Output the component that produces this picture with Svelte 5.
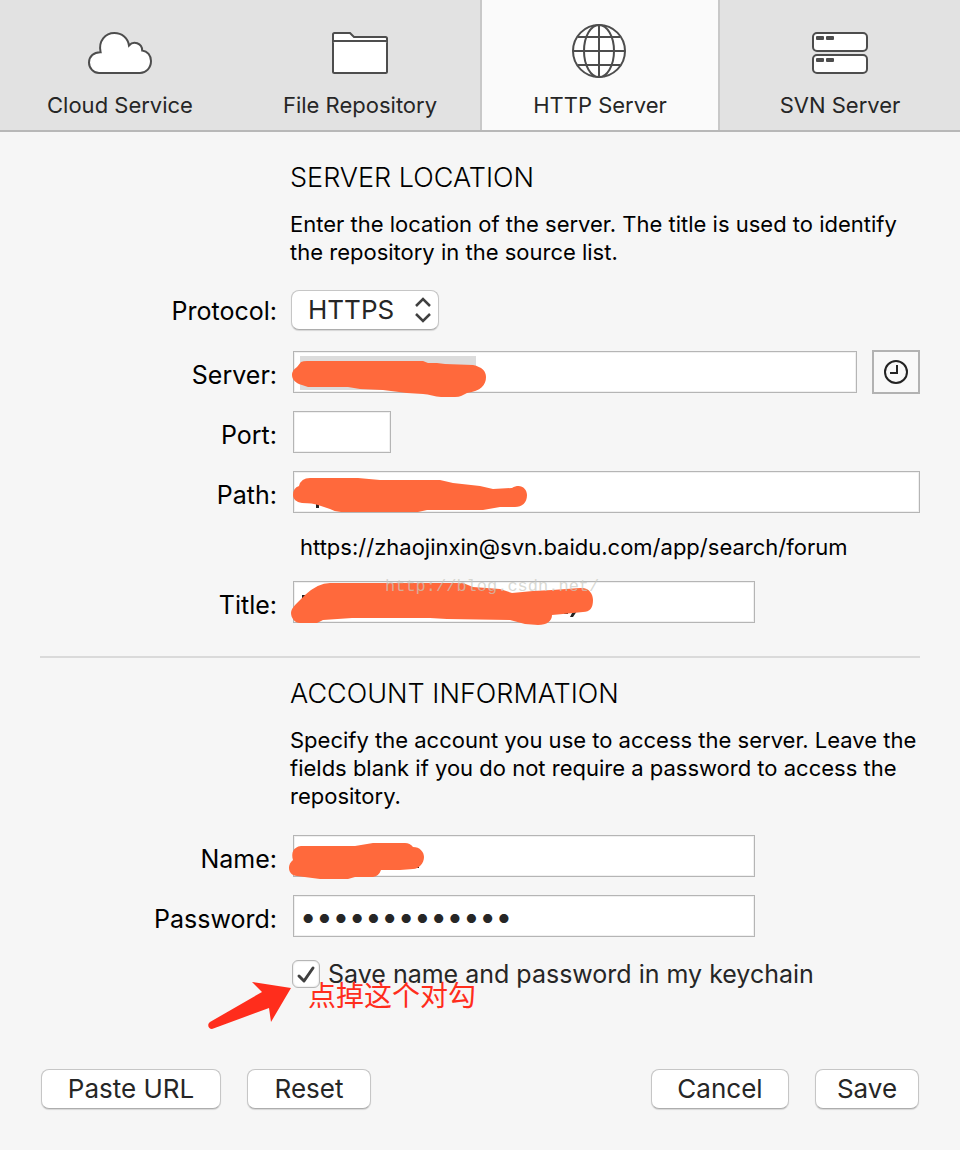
<script>
    let activeTab = "http";
    let protocol = "HTTPS";
    let server = "";
    let port = "";
    let path = "";
    let title = "";
    let name = "";
    let password = "thirteenchars";
    let keychain = true;

    const tabs = [
        { id: "cloud", label: "Cloud Service" },
        { id: "file", label: "File Repository" },
        { id: "http", label: "HTTP Server" },
        { id: "svn", label: "SVN Server" },
    ];

    function reset() {
        protocol = "HTTPS";
        server = port = path = title = name = password = "";
    }
</script>

<div class="window">
    <nav class="tabs">
        {#each tabs as tab}
            <button
                type="button"
                class="tab"
                class:active={activeTab === tab.id}
                on:click={() => (activeTab = tab.id)}
            >
                <svg class="tab-icon" viewBox="0 0 64 56" aria-hidden="true">
                    {#if tab.id === "cloud"}
                        <path
                            d="M11 51C5.500 51 1 46 1 40.500C1 34.500 5.800 30 12.600 30.200C10 19 17.500 11 26.300 11C34 11 40 16 41 23.500C45.500 18.500 54 21 54.200 28.500C59.500 29 63 33.500 63 39C63 46 58 51 52 51Z"
                        />
                    {:else if tab.id === "file"}
                        <path
                            d="M5 49.500V12.500Q5 11 6.500 11H22L26 15H57.500Q59 15 59 16.500V49.500Q59 51 57.500 51H6.500Q5 51 5 49.500Z"
                        />
                        <path d="M5 20.500Q5 19 6.500 19H57.500Q59 19 59 20.500" />
                    {:else if tab.id === "http"}
                        <circle cx="31" cy="29" r="26" />
                        <ellipse cx="31" cy="29" rx="15" ry="26" />
                        <path d="M31 3V55M5 29H57M10 15H52M10 43H52" />
                    {:else}
                        <rect x="5" y="11" width="54" height="18" rx="4" />
                        <rect x="5" y="33" width="54" height="18" rx="4" />
                        <g class="slots">
                            <rect x="8" y="14" width="8" height="4" rx="1" />
                            <rect x="18" y="14" width="8" height="4" rx="1" />
                            <rect x="8" y="36" width="8" height="4" rx="1" />
                            <rect x="18" y="36" width="8" height="4" rx="1" />
                        </g>
                    {/if}
                </svg>
                <span>{tab.label}</span>
            </button>
        {/each}
    </nav>

    <form on:submit|preventDefault>
        <section>
            <div class="intro">
                <h2>SERVER LOCATION</h2>
                <p>
                    Enter the location of the server. The title is used to
                    identify the repository in the source list.
                </p>
            </div>

            <div class="row protocol">
                <label for="protocol">Protocol:</label>
                <div class="select">
                    <select id="protocol" bind:value={protocol}>
                        <option>HTTP</option>
                        <option>HTTPS</option>
                    </select>
                    <svg viewBox="0 0 16 24" aria-hidden="true">
                        <path d="M1 8L8 1L15 8M1 16L8 23L15 16" />
                    </svg>
                </div>
            </div>

            <div class="row">
                <label for="server">Server:</label>
                <div class="line">
                    <div class="field">
                        <input id="server" type="text" bind:value={server} />
                        <svg class="scribble" aria-hidden="true">
                            <rect
                                class="selection"
                                x="7"
                                y="5"
                                width="176"
                                height="34"
                            />
                            <path
                                d="M8 11Q10 10 14 10H130L135 12H144L152 13L180 14C189 16 193 20 193 26C193 34 188 40 174 42L168 45Q166 46 162 46H148C142 46 136 43 130 43L114 42L90 39L67 38L55 36H15L9 34C2 32 -1 28 -1 24Q-1 19 4 16Z"
                            />
                        </svg>
                    </div>
                    <button type="button" class="history" aria-label="Recent servers">
                        <svg viewBox="0 0 24 24" aria-hidden="true">
                            <circle cx="12" cy="12" r="11" />
                            <path d="M13 5V13H6" />
                        </svg>
                    </button>
                </div>
            </div>

            <div class="row">
                <label for="port">Port:</label>
                <div class="field port">
                    <input id="port" type="text" bind:value={port} />
                </div>
            </div>

            <div class="row">
                <label for="path">Path:</label>
                <div class="field">
                    <input id="path" type="text" bind:value={path} />
                    <svg class="scribble" aria-hidden="true">
                        <rect class="ink" x="23" y="31" width="3" height="6" />
                        <path
                            d="M6 15Q8 7 17 7H65L87 9H147L160 12L187 15L200 18L219 17C227 12 234 17 234 24C234 32 229 36 222 36H207L190 39H134L125 41H48Q42 41 37 38L25 34Q20 32 9 32C3 31 0 28 0 24Q0 17 6 15Z"
                        />
                    </svg>
                </div>
            </div>

            <output class="url" for="server path">
                https://zhaojinxin@svn.baidu.com/app/search/forum
            </output>

            <div class="row">
                <label for="title">Title:</label>
                <div class="field medium">
                    <input id="title" type="text" bind:value={title} />
                    <svg class="scribble" aria-hidden="true">
                        <path class="ink" d="M9 14H12V18H9ZM271 31H275V33H271ZM280 30H284L280 36H277Z" />
                        <path
                            d="M12 14Q25 2 37 2H170L180 6L207 8L219 12L240 10L259 9L287 7C296 6 300 13 300 19C300 27 297 31 290 31L270 33L259 34C259 40 254 44 245 44L232 43L217 39L154 38L137 37H59L30 39L24 42H7C2 42 -2 37 -2 32Q-2 28 3 23Z"
                        />
                    </svg>
                    <span class="watermark">http://blog.csdn.net/</span>
                </div>
            </div>
        </section>

        <hr />

        <section>
            <div class="intro">
                <h2>ACCOUNT INFORMATION</h2>
                <p>
                    Specify the account you use to access the server. Leave the
                    fields blank if you do not require a password to access the
                    repository.
                </p>
            </div>

            <div class="row">
                <label for="name">Name:</label>
                <div class="field medium">
                    <input id="name" type="text" bind:value={name} />
                    <svg class="scribble" aria-hidden="true">
                        <rect class="ink" x="124" y="31" width="2" height="2" />
                        <path
                            d="M8 11H62L80 8H112Q117 8 120 12C127 12 131 17 131 22C131 28 126 34 120 34L107 35H88Q86 41 80 42H62L55 44H27L4 41C-1 41 -4 37 -4 33Q-4 28 0 25C-2 18 0 12 8 11Z"
                        />
                    </svg>
                </div>
            </div>

            <div class="row">
                <label for="password">Password:</label>
                <div class="field medium">
                    <input
                        id="password"
                        type="password"
                        autocomplete="off"
                        bind:value={password}
                    />
                </div>
            </div>

            <div class="keychain">
                <label>
                    <input type="checkbox" bind:checked={keychain} />
                    Save name and password in my keychain
                </label>
                <div class="note">
                    <svg viewBox="0 0 84 48" aria-hidden="true">
                        <path
                            d="M83 6L44 0L54 10L2 40C-1 42 0 47 4 47L61 26L63 40Z"
                        />
                    </svg>
                    <span lang="zh">点掉这个对勾</span>
                </div>
            </div>
        </section>

        <footer>
            <button type="button" class="push paste">Paste URL</button>
            <button type="button" class="push reset" on:click={reset}>Reset</button>
            <button type="button" class="push cancel">Cancel</button>
            <button type="submit" class="push save">Save</button>
        </footer>
    </form>
</div>

<style>
    :global(body) {
        margin: 0;
        background: #f6f6f6;
    }

    .window {
        font-family: Inter, "Noto Sans CJK SC", sans-serif;
        font-size: 26px;
        line-height: 32px;
        color: #000;
    }

    button,
    input,
    select {
        box-sizing: border-box;
        margin: 0;
        font: inherit;
        color: #262626;
    }

    .tabs {
        display: grid;
        grid-template-columns: repeat(4, 1fr);
        background: #e2e2e2;
        border-bottom: 2px solid #b8b8b8;
    }
    .tab {
        display: flex;
        flex-direction: column;
        align-items: center;
        gap: 12px;
        padding: 22px 0 10px;
        font-size: 22px;
        line-height: 30px;
        background: none;
        border: 0 solid #c8c8c8;
    }
    .tab.active {
        background: #fafafa;
        border-width: 0 2px;
    }
    .tab-icon {
        width: 64px;
        height: 56px;
        fill: #fff;
        stroke: #4d4d4d;
        stroke-width: 2;
    }
    .slots {
        fill: #4d4d4d;
        stroke: none;
    }

    form {
        padding: 30px 40px 40px;
    }

    section {
        display: flex;
        flex-direction: column;
        gap: 16px;
    }

    .intro {
        padding: 0 0 8px 250px;
    }
    h2 {
        margin: 0 0 16px;
        font-size: 27px;
        font-weight: 300;
    }
    p {
        margin: 0;
        font-size: 22px;
        line-height: 28px;
    }

    .row {
        display: grid;
        grid-template-columns: 237px 1fr;
        column-gap: 16px;
        align-items: center;
        min-height: 44px;
    }
    .row label {
        padding-top: 6px;
        font-size: 25px;
        text-align: right;
    }

    .row.protocol {
        column-gap: 14px;
        min-height: 40px;
        padding-bottom: 4px;
    }
    .row.protocol label {
        padding-top: 2px;
    }

    .select {
        position: relative;
        width: 148px;
    }
    .select select {
        display: block;
        appearance: none;
        width: 100%;
        height: 40px;
        padding: 0 16px;
        background: #fff;
        border: 1px solid #c6c6c6;
        border-bottom-color: #adadad;
        border-radius: 8px;
        box-shadow: 0 1px 1px #0002;
    }
    .select svg {
        position: absolute;
        top: 8px;
        right: 8px;
        width: 16px;
        height: 24px;
        overflow: visible;
        fill: none;
        stroke: #404040;
        stroke-width: 2.5;
        pointer-events: none;
    }

    .line {
        display: flex;
        align-items: center;
        gap: 15px;
    }
    .field {
        position: relative;
        flex: 1;
    }
    .medium {
        max-width: 462px;
    }
    .port {
        max-width: 98px;
    }
    .field input {
        display: block;
        width: 100%;
        height: 42px;
        padding: 0 8px;
        background: #fff;
        border: 1px solid #b5b5b5;
        border-radius: 0;
        box-shadow: inset 0 0 0 1px #f0f0f0;
    }
    .field input[type="password"] {
        padding: 0 6px;
        font-size: 29px;
    }

    .history {
        display: grid;
        place-items: center;
        width: 48px;
        height: 44px;
        padding: 0;
        background: #f8f8f8;
        border: 2px solid #b2b2b2;
    }
    .history svg {
        width: 24px;
        height: 24px;
        fill: none;
        stroke: #222;
        stroke-width: 2;
    }

    .scribble {
        position: absolute;
        top: 0;
        left: 0;
        width: 100%;
        height: 100%;
        overflow: visible;
        fill: #ff693c;
        pointer-events: none;
    }
    .selection {
        fill: #dcdcdc;
    }
    .ink {
        fill: #222;
    }

    .url {
        padding-left: 260px;
        font-size: 22px;
        line-height: 34px;
    }
    .watermark {
        position: absolute;
        top: -4px;
        left: 92px;
        font-family: "Liberation Mono", monospace;
        font-size: 17px;
        line-height: 20px;
        color: #c8c8c0b0;
        pointer-events: none;
    }

    hr {
        height: 2px;
        margin: 32px 0 20px;
        background: #dadada;
        border: 0;
    }

    .keychain {
        position: relative;
        padding: 4px 0 0 252px;
        color: #262626;
    }
    .keychain label {
        display: flex;
        align-items: center;
        gap: 8px;
        font-size: 25px;
    }
    .keychain input {
        appearance: none;
        flex: none;
        width: 28px;
        height: 28px;
        background: #fff;
        border: 1px solid #b5b5b5;
        border-radius: 6px;
        box-shadow: inset 0 0 2px #0003;
    }
    .keychain input:checked {
        background: #fff
            url("data:image/svg+xml,%3Csvg xmlns='http://www.w3.org/2000/svg' viewBox='0 0 26 26'%3E%3Cpath d='M6 15L11 20L20 7' fill='none' stroke='%23404040' stroke-width='3' stroke-linecap='round' stroke-linejoin='round'/%3E%3C/svg%3E");
    }

    .note {
        position: absolute;
        top: 24px;
        left: 168px;
        display: flex;
        gap: 16px;
        color: #ff2d1c;
        pointer-events: none;
    }
    .note svg {
        width: 84px;
        height: 48px;
        margin-top: 4px;
        fill: #ff2d1c;
    }
    .note span {
        font-family: "Noto Sans CJK SC", sans-serif;
        font-size: 28px;
        font-weight: 400;
    }

    footer {
        display: flex;
        gap: 26px;
        padding: 79px 1px 0;
    }
    .push {
        height: 40px;
        padding: 0;
        background: #fff;
        border: 1px solid #c6c6c6;
        border-bottom-color: #adadad;
        border-radius: 8px;
        box-shadow: 0 1px 1px #0002;
    }
    .paste {
        width: 180px;
    }
    .reset {
        width: 124px;
    }
    .cancel {
        width: 138px;
        margin-left: auto;
    }
    .save {
        width: 104px;
    }
</style>
